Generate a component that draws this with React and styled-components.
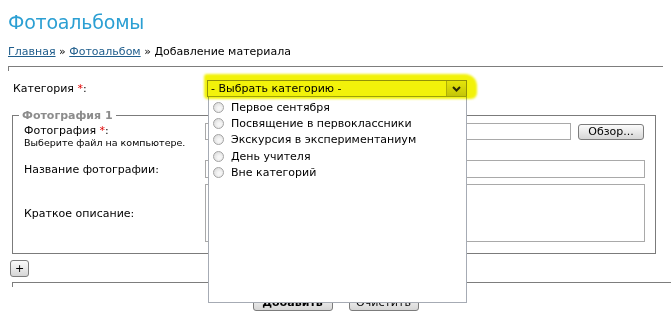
import React from 'react';
import styled, { createGlobalStyle } from 'styled-components';

const GlobalStyle = createGlobalStyle`
  body {
    margin: 0;
    background: #fff;
    font-family: "DejaVu Sans", Verdana, sans-serif;
    font-size: 11px;
    color: #000;
  }
`;

const Page = styled.div`
  position: relative;
  width: 655px;
  height: 320px;
  padding: 0 8px;
  overflow: hidden;
`;

const Title = styled.h1`
  margin: 0;
  padding-top: 10px;
  height: 24px;
  line-height: 24px;
  font-size: 19px;
  font-weight: normal;
  letter-spacing: -0.2px;
  color: #2b9fd3;
`;

const Crumbs = styled.div`
  margin-top: 11px;
  line-height: 14px;
  font-size: 11px;
`;

const CrumbLink = styled.a`
  color: #1f5d8c;
  text-decoration: underline;
`;

const Divider = styled.div`
  margin: ${({ $top }) => $top}px ${({ $right }) => $right || 0}px 0 ${({ $left }) => $left || 0}px;
  height: 4px;
  border-top: 1px solid #7d7d7d;
  border-left: 1px solid #7d7d7d;
`;

const CategoryRow = styled.div`
  display: flex;
  align-items: center;
  margin-top: 9px;
  height: 17px;
`;

const Label = styled.div`
  width: ${({ $w }) => $w}px;
  padding-left: ${({ $pl }) => $pl || 0}px;
  box-sizing: border-box;
  flex-shrink: 0;
  line-height: 13px;
`;

const Star = styled.span`
  color: #e10000;
`;

const SelectWrap = styled.div`
  position: relative;
  width: 260px;
  height: 17px;
`;

const Highlight = styled.div`
  position: absolute;
  left: -3px;
  top: -6px;
  width: 273px;
  height: 25px;
  background: #f2f20a;
  border-radius: 3px 12px 6px 4px;
  filter: blur(1.2px);
  mix-blend-mode: multiply;
  z-index: 3;
  pointer-events: none;
`;

const SelectBox = styled.div`
  display: flex;
  height: 17px;
  box-sizing: border-box;
  border: 1px solid #9a9a9a;
  background: #fff;
`;

const SelectText = styled.div`
  flex: 1;
  padding-left: 3px;
  line-height: 15px;
`;

const ArrowBtn = styled.div`
  width: 19px;
  display: flex;
  align-items: center;
  justify-content: center;
  border-left: 1px solid #b8b8b8;
  background: linear-gradient(#f2f2f2, #cfcfcf);
`;

const Dropdown = styled.div`
  position: absolute;
  left: 1px;
  top: 16px;
  width: 259px;
  height: 207px;
  box-sizing: border-box;
  border: 1px solid #a6abb4;
  background: #fff;
  padding-top: 2px;
  z-index: 2;
`;

const Option = styled.div`
  display: flex;
  align-items: center;
  height: 16.3px;
  padding-left: 4px;
`;

const Radio = styled.span`
  width: 11px;
  height: 11px;
  box-sizing: border-box;
  border-radius: 50%;
  border: 1px solid #a3a3a3;
  background: radial-gradient(circle at 60% 60%, #f6f6f6 20%, #d4d4d4 100%);
  margin-right: 7px;
`;

const Fieldset = styled.fieldset`
  margin: 12px 7px 0 4px;
  padding: 0 10px 11px 11px;
  border: 1px solid #7b7b7b;
  border-radius: 0;
`;

const Legend = styled.legend`
  margin-left: -5px;
  padding: 0 3px;
  line-height: 13px;
  font-weight: bold;
  color: #8c8c8c;
`;

const Row = styled.div`
  display: flex;
  align-items: ${({ $align }) => $align || 'center'};
  margin-top: ${({ $mt }) => $mt}px;
  height: ${({ $h }) => $h}px;
`;

const Hint = styled.div`
  font-size: 9.5px;
  line-height: 12px;
`;

const Input = styled.div`
  width: ${({ $w }) => $w}px;
  height: ${({ $h }) => $h}px;
  box-sizing: border-box;
  border: 1px solid #a9a9a9;
  background: #fff;
`;

const Button = styled.button`
  display: block;
  height: ${({ $h }) => $h || 17}px;
  width: ${({ $w }) => $w}px;
  padding: 0;
  margin: ${({ $mt }) => $mt || 0}px 0 0 ${({ $ml }) => $ml || 0}px;
  box-sizing: border-box;
  border: 1px solid #7c7c7c;
  border-radius: 3px;
  background: linear-gradient(#fbfbfb, #d6d6d6);
  font-family: "DejaVu Sans", Verdana, sans-serif;
  font-size: 11px;
  font-weight: ${({ $bold }) => ($bold ? 'bold' : 'normal')};
  color: #000;
  line-height: 14px;
`;

const Actions = styled.div`
  display: flex;
  justify-content: center;
  gap: 16px;
  margin-top: 7px;
`;

const options = [
  'Первое сентября',
  'Посвящение в первоклассники',
  'Экскурсия в экспериментаниум',
  'День учителя',
  'Вне категорий',
];

export default function App() {
  return (
    <>
      <GlobalStyle />
      <Page>
        <Title>Фотоальбомы</Title>
        <Crumbs>
          <CrumbLink href="#">Главная</CrumbLink> » <CrumbLink href="#">Фотоальбом</CrumbLink> » Добавление материала
        </Crumbs>
        <Divider $top={7} />

        <CategoryRow>
          <Label $w={199} $pl={5}>
            Категория <Star>*</Star>:
          </Label>
          <SelectWrap>
            <SelectBox>
              <SelectText>- Выбрать категорию -</SelectText>
              <ArrowBtn>
                <svg width="9" height="6" viewBox="0 0 9 6">
                  <path d="M1 1 L4.5 4.5 L8 1" fill="none" stroke="#2c2c2c" strokeWidth="2" />
                </svg>
              </ArrowBtn>
            </SelectBox>
            <Highlight />
            <Dropdown>
              {options.map((o) => (
                <Option key={o}>
                  <Radio />
                  {o}
                </Option>
              ))}
            </Dropdown>
          </SelectWrap>
        </CategoryRow>

        <Fieldset>
          <Legend>Фотография 1</Legend>
          <Row $mt={1} $h={25} $align="flex-start">
            <Label $w={181}>
              <div style={{ marginTop: 1 }}>
                Фотография <Star>*</Star>:
              </div>
              <Hint>Выберите файл на компьютере.</Hint>
            </Label>
            <Input $w={366} $h={17} />
            <Button $w={66} $h={16} $ml={7} $mt={1}>Обзор...</Button>
          </Row>
          <Row $mt={12} $h={18}>
            <Label $w={181}>Название фотографии:</Label>
            <Input $w={440} $h={18} />
          </Row>
          <Row $mt={6} $h={58}>
            <Label $w={181}>Краткое описание:</Label>
            <Input $w={440} $h={58} />
          </Row>
        </Fieldset>

        <Button $w={19} $h={17} $ml={2} $mt={6}>+</Button>
        <Divider $top={5} $left={4} $right={-8} />

        <Actions>
          <Button $w={80} $bold>Добавить</Button>
          <Button $w={70}>Очистить</Button>
        </Actions>
      </Page>
    </>
  );
}
